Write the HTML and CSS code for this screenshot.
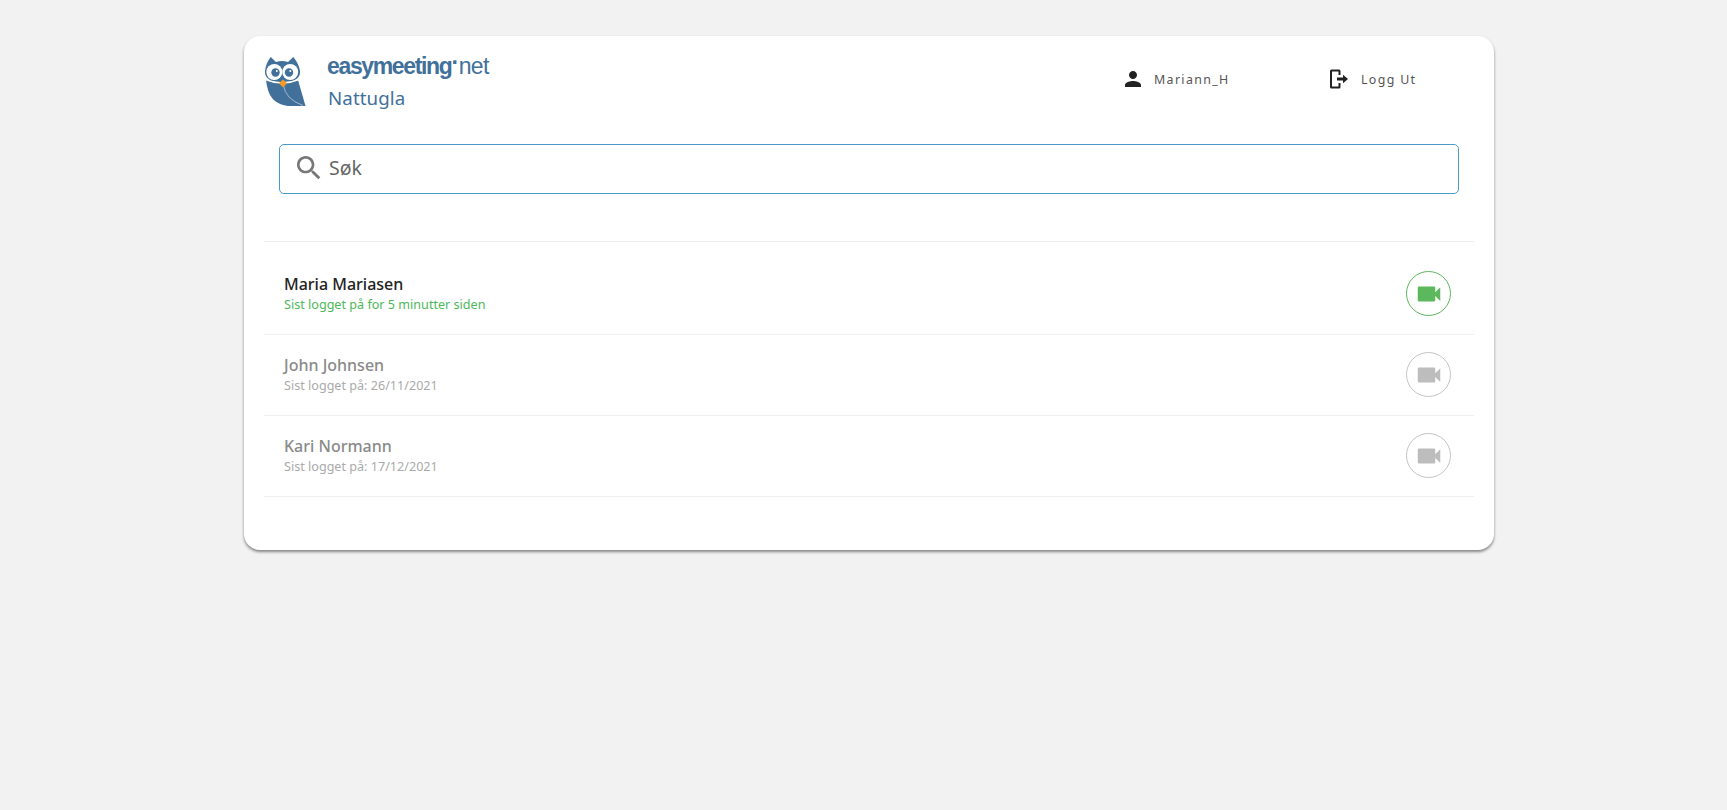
FILE: index.html
```html
<!DOCTYPE html>
<html lang="no">
<head>
<meta charset="utf-8">
<title>Nattugla</title>
<link rel="stylesheet" href="styles.css">
</head>
<body>
<main class="card">
  <header class="top">
    <div class="brand">
      <svg class="owl" viewBox="0 0 42 50" width="42" height="50">
        <path class="owl-blue" d="M2 23 L34 23 L41.500 49 L24 49 Q8 47 4 33 Q2.500 28 2 23Z"/>
        <path class="owl-blue" d="M6.700 0 L12 5 Q18 3 24 5 L29.300 0 Q35 7 36 14 Q36.500 20 31 23 Q18 27.500 6 23 Q0.500 20 1 14 Q2 6 6.700 0Z"/>
        <path class="owl-gap" d="M1.500 22.500 Q18 29.500 35 22.500"/>
        <circle class="owl-white" cx="10.300" cy="15" r="8"/>
        <circle class="owl-white" cx="26.200" cy="15" r="8"/>
        <circle class="owl-blue" cx="11.500" cy="15.500" r="4.200"/>
        <circle class="owl-blue" cx="25" cy="15.500" r="4.200"/>
        <circle class="owl-white" cx="12.800" cy="14" r="1"/>
        <circle class="owl-white" cx="26.300" cy="14" r="1"/>
        <path class="owl-line" d="M19.500 28 Q21 42 39 48.500"/>
        <path class="owl-beak" d="M19 22.500 L23 26.300 L19 30.500 L15 26.300Z"/>
      </svg>
      <div class="brand-text">
        <div class="logo-word"><b>easymeeting</b><span class="dot">·</span><span class="net">net</span></div>
        <div class="app-name">Nattugla</div>
      </div>
    </div>
    <nav class="nav">
      <div class="nav-item user">
        <svg class="nav-icon" viewBox="0 0 24 24" width="24" height="24"><path d="M12 12c2.210 0 4-1.790 4-4s-1.790-4-4-4-4 1.790-4 4 1.790 4 4 4zm0 2c-2.670 0-8 1.340-8 4v2h16v-2c0-2.660-5.330-4-8-4z"/></svg>
        <span>Mariann_H</span>
      </div>
      <div class="nav-item logout">
        <svg class="nav-icon" viewBox="0 0 24 24" width="24" height="24"><path d="M5.500 2.500H13a1.500 1.500 0 0 1 1.500 1.500v4h-2V4.500H6v15h6.500V16h2v4a1.500 1.500 0 0 1-1.500 1.500H5.500A1.500 1.500 0 0 1 4 20V4a1.500 1.500 0 0 1 1.500-1.500z"/><path d="M11 10.500h6V7.800l5 4.200-5 4.200v-2.700h-6z"/></svg>
        <span>Logg Ut</span>
      </div>
    </nav>
  </header>

  <div class="search">
    <svg class="search-icon" viewBox="0 0 24 24" width="32" height="32"><path d="M15.500 14h-.79l-.28-.27C15.410 12.590 16 11.110 16 9.500 16 5.910 13.090 3 9.500 3S3 5.910 3 9.500 5.910 16 9.500 16c1.610 0 3.090-.59 4.230-1.570l.27.28v.79l5 4.990L20.490 19l-4.990-5zm-6 0C7.010 14 5 11.990 5 9.500S7.010 5 9.500 5 14 7.010 14 9.500 11.990 14 9.500 14z"/></svg>
    <span class="search-text">Søk</span>
  </div>

  <ul class="list">
    <li class="row online">
      <div class="person"><div class="name">Maria Mariasen</div><div class="seen">Sist logget på for 5 minutter siden</div></div>
      <button class="call" type="button"><svg viewBox="0 0 24 24" width="30" height="30"><path d="M17 10.500V7a1 1 0 0 0-1-1H4a1 1 0 0 0-1 1v10a1 1 0 0 0 1 1h12a1 1 0 0 0 1-1v-3.500l4 4v-11l-4 4z"/></svg></button>
    </li>
    <li class="row">
      <div class="person"><div class="name">John Johnsen</div><div class="seen">Sist logget på: 26/11/2021</div></div>
      <button class="call" type="button"><svg viewBox="0 0 24 24" width="30" height="30"><path d="M17 10.500V7a1 1 0 0 0-1-1H4a1 1 0 0 0-1 1v10a1 1 0 0 0 1 1h12a1 1 0 0 0 1-1v-3.500l4 4v-11l-4 4z"/></svg></button>
    </li>
    <li class="row">
      <div class="person"><div class="name">Kari Normann</div><div class="seen">Sist logget på: 17/12/2021</div></div>
      <button class="call" type="button"><svg viewBox="0 0 24 24" width="30" height="30"><path d="M17 10.500V7a1 1 0 0 0-1-1H4a1 1 0 0 0-1 1v10a1 1 0 0 0 1 1h12a1 1 0 0 0 1-1v-3.500l4 4v-11l-4 4z"/></svg></button>
    </li>
  </ul>
</main>
</body>
</html>
```
FILE: styles.css
```css
* { box-sizing: border-box; }
html, body { margin: 0; height: 100%; }
body {
  background: #f2f2f2;
  font-family: "Noto Sans", "Open Sans", sans-serif;
  padding: 36px 233px 0 244px;
  overflow: hidden;
}
.card {
  width: 1250px;
  height: 514px;
  background: #fff;
  border-radius: 16px;
  box-shadow: 0 2px 3px rgba(0,0,0,.45);
  padding: 20px 20px 0;
}
.top { display: flex; justify-content: space-between; height: 88px; }
.brand { display: flex; }
.owl { display: block; margin-top: 1px; }
.owl-blue { fill: #41709a; }
.owl-white { fill: #fff; }
.owl-beak { fill: #f59a23; }
.owl-gap { fill: none; stroke: #fff; stroke-width: 1.500; }
.owl-line { fill: none; stroke: #fff; stroke-width: .5; }
.brand-text { margin-left: 21px; }
.logo-word { font-family: "Liberation Sans", sans-serif; font-size: 23px; line-height: 26px; color: #41709a; letter-spacing: -1.35px; margin-top: -3px; }
.logo-word b { font-weight: 700; }
.dot { letter-spacing: -.5px; font-weight: 700; position: relative; top: -4px; }
.net { font-weight: 400; letter-spacing: -.6px; }
.app-name { font-size: 18.7px; line-height: 28px; color: #41709a; margin-top: 5px; letter-spacing: .1px; padding-left: 1px; }
.nav { display: flex; padding-top: 11px; }
.nav-item { display: flex; align-items: center; height: 24px; font-size: 12.4px; letter-spacing: 1.35px; color: #555; }
.nav-icon { fill: #222; display: block; }
.nav-item span { margin-left: 9px; }
.user { width: 207px; }
.logout { width: 146px; }
.logout .nav-icon { margin-left: -2px; }
.logout span { margin-left: 11px; }
.search {
  margin: 0 15px;
  height: 50px;
  border: 1px solid #4a9ac9;
  border-radius: 5px;
  display: flex;
  align-items: center;
  padding-left: 13px;
  color: #666;
  font-size: 19.5px;
  line-height: 24px;
}
.search-icon { fill: #777; display: block; margin-bottom: 2px; }
.search-text { margin-left: 4px; margin-top: -2px; }
.list { list-style: none; margin: 47px 0 0; padding: 12px 0 0; border-top: 1px solid #eeeeee; }
.row {
  height: 81px;
  border-bottom: 1px solid #f0f0f0;
  display: flex;
  align-items: center;
  justify-content: space-between;
  padding: 0 23px 0 20px;
}
.name { font-size: 16px; line-height: 20px; color: #8a8a8a; font-weight: 500; }
.seen { font-size: 12.6px; line-height: 20px; margin-top: 1px; color: #aaa; }
.call {
  width: 45px; height: 45px; padding: 0;
  margin-bottom: 1px;
  border: 1px solid #c4c4c4; border-radius: 50%;
  background: #fff;
  display: flex; align-items: center; justify-content: center;
}
.call svg { fill: #bdbdbd; display: block; }
.online .name { color: #222; }
.online .seen { color: #4cb85a; }
.online .call { border-color: #5cb85c; }
.online .call svg { fill: #5cb85c; }
```
